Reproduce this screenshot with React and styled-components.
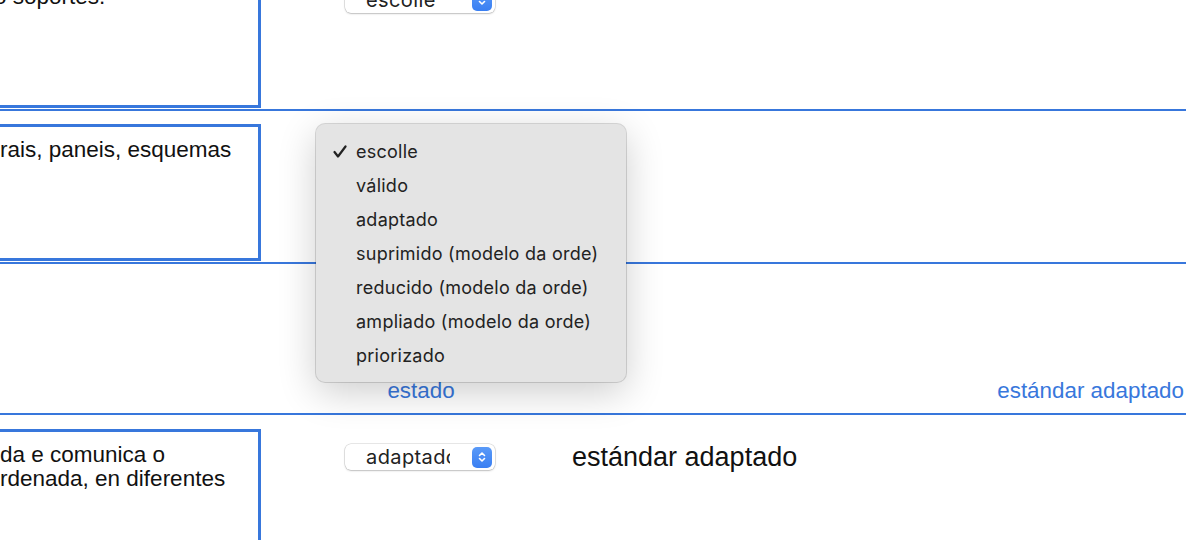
import React from "react";
import styled, { createGlobalStyle } from "styled-components";

const BLUE = "#3877dc";

const GlobalStyle = createGlobalStyle`
  html, body {
    margin: 0;
    padding: 0;
    background: #fff;
    overflow: hidden;
  }
  body {
    font-family: "Liberation Sans", Arial, sans-serif;
    color: #111;
  }
`;

const Page = styled.div`
  margin: -42px 0 0 -10px;
  width: 1196px;
`;

const Row = styled.div`
  display: grid;
  grid-template-columns: 272px 310px 1fr;
  height: ${(p) => p.$h || 151}px;
  border-bottom: 2px solid ${BLUE};
`;

const Cell = styled.div`
  position: relative;
  display: flex;
  flex-direction: column;
  align-items: flex-start;
  justify-content: ${(p) => (p.$bottom ? "flex-end" : "flex-start")};
  padding-bottom: ${(p) => p.$pb || 0}px;
`;

const Box = styled.div`
  box-sizing: border-box;
  width: 271px;
  height: 137px;
  margin-top: ${(p) => p.$top || 13}px;
  border: 3px solid ${BLUE};
  padding: 11px 7px 0 7px;
  font-size: 22.5px;
  line-height: 24px;
  color: #111;
  white-space: pre;
  text-indent: ${(p) => p.$indent || 0}px;
  overflow: hidden;
`;

const SelectWrap = styled.div`
  margin: 29px 0 0 83px;
  width: 150px;
  height: 26px;
  box-sizing: border-box;
  background: #fff;
  border-radius: 6px;
  box-shadow: 0 0 0 0.5px rgba(0, 0, 0, 0.18), 0 1px 2px rgba(0, 0, 0, 0.18);
  display: flex;
  align-items: center;
  padding: 0 3px 0 21px;
`;

const SelectText = styled.span`
  flex: 1;
  margin-right: 22px;
  overflow: hidden;
  white-space: nowrap;
  font-family: Inter, "Noto Sans", sans-serif;
  font-size: 20px;
  letter-spacing: 0.4px;
  color: #222;
`;

const Stepper = styled.span`
  width: 20px;
  height: 21px;
  border-radius: 5px;
  background: linear-gradient(#5a9af8, #3a7ff2);
  display: flex;
  align-items: center;
  justify-content: center;
`;

const Label = styled.div`
  font-size: 22.4px;
  line-height: 24px;
  color: ${BLUE};
  white-space: nowrap;
  ${(p) => (p.$center ? "width: 150px; margin-left: 84px; text-align: center;" : "")}
  ${(p) => (p.$right ? "align-self: flex-end; margin-right: 2px;" : "")}
`;

const Big = styled.div`
  font-size: 27px;
  line-height: 30px;
  margin-top: 27px;
  color: #111;
  white-space: nowrap;
`;

const Menu = styled.ul`
  position: absolute;
  left: 54px;
  top: 13px;
  z-index: 5;
  margin: 0;
  width: 310px;
  height: 258px;
  box-sizing: border-box;
  padding: 10px 0;
  list-style: none;
  background: #e4e4e4;
  border-radius: 9px;
  box-shadow: 0 0 0 1px rgba(0, 0, 0, 0.14), 0 10px 38px rgba(0, 0, 0, 0.2);
`;

const Item = styled.li`
  position: relative;
  height: 34px;
  display: flex;
  align-items: center;
  padding-left: 40px;
  font-family: Inter, "Noto Sans", sans-serif;
  font-size: 18px;
  letter-spacing: 0.25px;
  color: #222;
`;

const Check = styled.svg`
  position: absolute;
  left: 17px;
  top: 11px;
`;

const Chevrons = () => (
  <svg width="10" height="14" viewBox="0 0 10 14">
    <path
      d="M2.5 5.5 L5 3 L7.5 5.5 M2.5 8.5 L5 11 L7.5 8.5"
      fill="none"
      stroke="#fff"
      strokeWidth="1.6"
      strokeLinecap="round"
      strokeLinejoin="round"
    />
  </svg>
);

const Select = ({ value }) => (
  <SelectWrap>
    <SelectText>{value}</SelectText>
    <Stepper>
      <Chevrons />
    </Stepper>
  </SelectWrap>
);

const options = [
  "escolle",
  "válido",
  "adaptado",
  "suprimido (modelo da orde)",
  "reducido (modelo da orde)",
  "ampliado (modelo da orde)",
  "priorizado",
];

export default function App() {
  return (
    <>
      <GlobalStyle />
      <Page>
        <Row $h={151}>
          <Cell>
            <Box $top={13} $indent={-6}>o soportes.</Box>
          </Cell>
          <Cell>
            <Select value="escolle" />
          </Cell>
          <Cell />
        </Row>
        <Row $h={151}>
          <Cell>
            <Box $top={13}>rais, paneis, esquemas</Box>
          </Cell>
          <Cell>
            <Select value="escolle" />
            <Menu>
              {options.map((o, i) => (
                <Item key={o}>
                  {i === 0 && (
                    <Check width="14" height="13" viewBox="0 0 14 13">
                      <path
                        d="M1.5 7 L5 11.5 L12.5 1.5"
                        fill="none"
                        stroke="#222"
                        strokeWidth="2.2"
                        strokeLinecap="round"
                        strokeLinejoin="round"
                      />
                    </Check>
                  )}
                  {o}
                </Item>
              ))}
            </Menu>
          </Cell>
          <Cell />
        </Row>
        <Row $h={149}>
          <Cell />
          <Cell $bottom $pb={10}>
            <Label $center>estado</Label>
          </Cell>
          <Cell $bottom $pb={10}>
            <Label $right>estándar adaptado</Label>
          </Cell>
        </Row>
        <Row $h={151}>
          <Cell>
            <Box $top={14}>{"da e comunica o\nrdenada, en diferentes"}</Box>
          </Cell>
          <Cell>
            <Select value="adaptado" />
          </Cell>
          <Cell>
            <Big>estándar adaptado</Big>
          </Cell>
        </Row>
      </Page>
    </>
  );
}
